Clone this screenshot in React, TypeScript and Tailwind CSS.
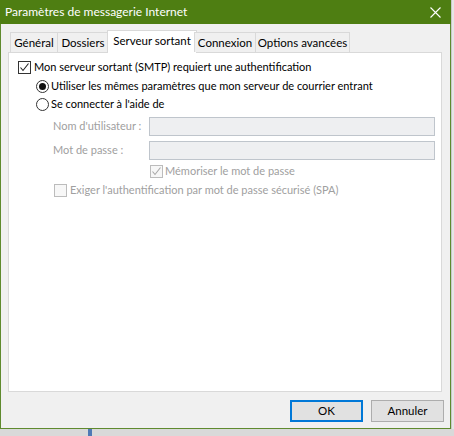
import React from "react";

const Check = ({ checked, disabled }: { checked?: boolean; disabled?: boolean }) => (
  <div
    className={`w-[13px] h-[13px] border flex items-center justify-center shrink-0 ${
      disabled ? "border-[#bcbcbc] bg-[#f7f7f7]" : "border-[#333333] bg-white"
    }`}
  >
    {checked && (
      <svg width="11" height="11" viewBox="0 0 11 11">
        <polyline
          points="1.5,5.5 4,8.5 9.5,1.5"
          fill="none"
          stroke={disabled ? "#a8a8a8" : "#222222"}
          strokeWidth="1.1"
        />
      </svg>
    )}
  </div>
);

const Radio = ({ checked }: { checked?: boolean }) => (
  <div className="w-[13px] h-[13px] rounded-full border border-[#333333] bg-white flex items-center justify-center shrink-0">
    {checked && <div className="w-[7px] h-[7px] rounded-full bg-[#111111]" />}
  </div>
);

export default function App() {
  const tabs = [
    { label: "Général", w: "w-[48px]" },
    { label: "Dossiers", w: "w-[52px]" },
    { label: "Serveur sortant", w: "w-[90px]", sel: true },
    { label: "Connexion", w: "w-[62px]" },
    { label: "Options avancées", w: "w-[95px]" },
  ];
  return (
    <div className="w-[454px] h-[436px] bg-[#d9d9d9] overflow-hidden flex flex-col font-['Lato',sans-serif] text-[11px] text-[#000] whitespace-nowrap">
      <div className="flex h-[429px]">
        <div className="w-[451px] h-[429px] bg-[#f0f0f0] border border-t-0 border-[#5f8a2e] flex flex-col">
          <div className="h-[24px] bg-[#4e7e12] flex items-center justify-between pl-[5px] pr-[10px] -mx-px">
            <span className="text-white text-[12px] leading-none pb-[1px]">Paramètres de messagerie Internet</span>
            <svg width="11" height="11" viewBox="0 0 11 11">
              <path d="M0.5 0.5 L10.5 10.5 M10.5 0.5 L0.5 10.5" stroke="white" strokeWidth="1.1" />
            </svg>
          </div>
          <div className="flex flex-col pl-[7px] pr-[8px] pt-[6px]">
            <div className="flex items-end h-[22px] pl-[2px] relative z-10">
              {tabs.map((t) =>
                t.sel ? (
                  <div
                    key={t.label}
                    className={`${t.w} h-[23px] -mb-px -mx-[2px] bg-white border border-b-0 border-[#d9d9d9] flex items-center justify-center pb-[3px] text-[11.5px]`}
                  >
                    {t.label}
                  </div>
                ) : (
                  <div
                    key={t.label}
                    className={`${t.w} h-[20px] bg-[#f0f0f0] border border-b-0 border-[#d9d9d9] -ml-px first:ml-0 flex items-center justify-center text-[11.5px]`}
                  >
                    {t.label}
                  </div>
                )
              )}
            </div>
            <div className="h-[340px] bg-white border border-[#d9d9d9] flex flex-col pl-[9px] pr-[6px] pt-[5px]">
              <div className="h-[18px] flex items-center gap-[3px]">
                <Check checked />
                <span>Mon serveur sortant (SMTP) requiert une authentification</span>
              </div>
              <div className="h-[18px] mt-[1px] flex items-center gap-[2px] pl-[18px]">
                <Radio checked />
                <span>Utiliser les mêmes paramètres que mon serveur de courrier entrant</span>
              </div>
              <div className="h-[18px] flex items-center gap-[2px] pl-[18px]">
                <Radio />
                <span>Se connecter à l'aide de</span>
              </div>
              <div className="flex items-center mt-[4px] pl-[35px] text-[#a0a0a0]">
                <span className="w-[96px]">Nom d'utilisateur :</span>
                <div className="flex-1 h-[19px] bg-[#eeeff1] border border-[#bfc5cc]" />
              </div>
              <div className="flex items-center mt-[5px] pl-[35px] text-[#a0a0a0]">
                <span className="w-[96px]">Mot de passe :</span>
                <div className="flex-1 h-[19px] bg-[#eeeff1] border border-[#bfc5cc]" />
              </div>
              <div className="h-[18px] mt-[2px] flex items-center gap-[2px] pl-[132px] text-[#a0a0a0]">
                <Check checked disabled />
                <span>Mémoriser le mot de passe</span>
              </div>
              <div className="h-[18px] mt-[1px] flex items-center gap-[3px] pl-[36px] text-[#a0a0a0]">
                <Check disabled />
                <span>Exiger l'authentification par mot de passe sécurisé (SPA)</span>
              </div>
            </div>
          </div>
          <div className="flex justify-end gap-[8px] pr-[6px] mt-[8px]">
            <button className="w-[73px] h-[22px] bg-[#e1e1e1] border-2 border-[#0078d7] flex items-center justify-center text-[11.5px]">
              OK
            </button>
            <button className="w-[73px] h-[22px] bg-[#e1e1e1] border border-[#adadad] flex items-center justify-center text-[11.5px]">
              Annuler
            </button>
          </div>
        </div>
        <div className="flex-1 bg-[#e6e6e6] border-l border-[#c8c8c8]" />
      </div>
      <div className="flex-1 flex">
        <div className="w-[88px]" />
        <div className="w-[4px] bg-[#4f79b5]" />
      </div>
    </div>
  );
}
